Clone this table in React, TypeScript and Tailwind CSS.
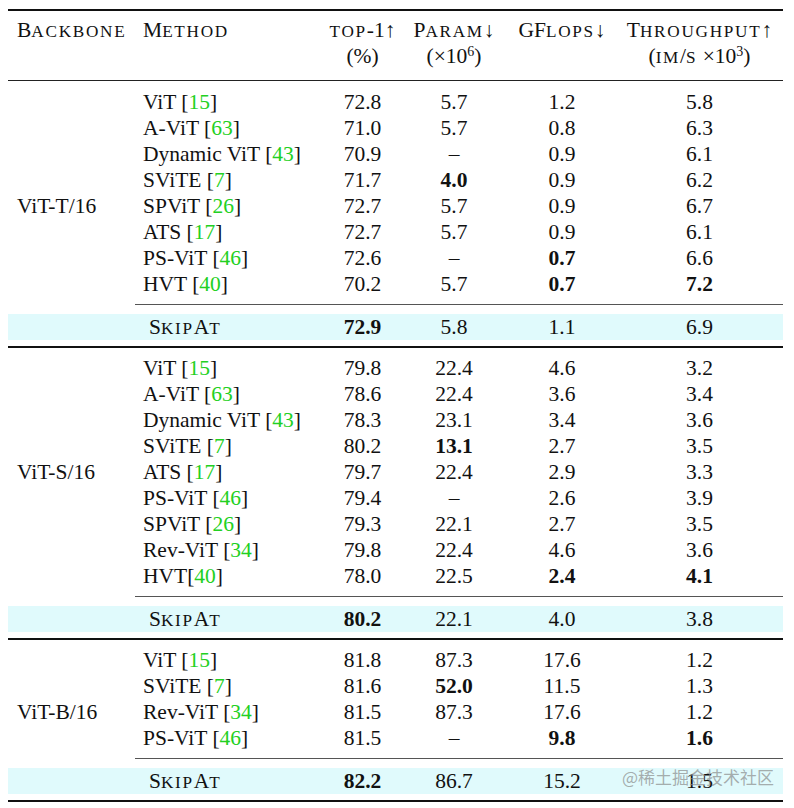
import type { ReactNode } from 'react';

type Key = 'top1' | 'param' | 'gflops' | 'tput';

type Row = {
  name: string;
  cite: string;
  tight?: boolean; // "HVT[40]" has no space before the bracket
  top1: string;
  param: string;
  gflops: string;
  tput: string;
  bold?: Key[];
};

type Section = {
  backbone: string;
  labelAt: number;
  rows: Row[];
  skip: Record<Key, string>;
};

const sections: Section[] = [
  {
    backbone: 'ViT-T/16',
    labelAt: 4,
    rows: [
      { name: 'ViT', cite: '15', top1: '72.8', param: '5.7', gflops: '1.2', tput: '5.8' },
      { name: 'A-ViT', cite: '63', top1: '71.0', param: '5.7', gflops: '0.8', tput: '6.3' },
      { name: 'Dynamic ViT', cite: '43', top1: '70.9', param: '–', gflops: '0.9', tput: '6.1' },
      { name: 'SViTE', cite: '7', top1: '71.7', param: '4.0', gflops: '0.9', tput: '6.2', bold: ['param'] },
      { name: 'SPViT', cite: '26', top1: '72.7', param: '5.7', gflops: '0.9', tput: '6.7' },
      { name: 'ATS', cite: '17', top1: '72.7', param: '5.7', gflops: '0.9', tput: '6.1' },
      { name: 'PS-ViT', cite: '46', top1: '72.6', param: '–', gflops: '0.7', tput: '6.6', bold: ['gflops'] },
      { name: 'HVT', cite: '40', top1: '70.2', param: '5.7', gflops: '0.7', tput: '7.2', bold: ['gflops', 'tput'] },
    ],
    skip: { top1: '72.9', param: '5.8', gflops: '1.1', tput: '6.9' },
  },
  {
    backbone: 'ViT-S/16',
    labelAt: 4,
    rows: [
      { name: 'ViT', cite: '15', top1: '79.8', param: '22.4', gflops: '4.6', tput: '3.2' },
      { name: 'A-ViT', cite: '63', top1: '78.6', param: '22.4', gflops: '3.6', tput: '3.4' },
      { name: 'Dynamic ViT', cite: '43', top1: '78.3', param: '23.1', gflops: '3.4', tput: '3.6' },
      { name: 'SViTE', cite: '7', top1: '80.2', param: '13.1', gflops: '2.7', tput: '3.5', bold: ['param'] },
      { name: 'ATS', cite: '17', top1: '79.7', param: '22.4', gflops: '2.9', tput: '3.3' },
      { name: 'PS-ViT', cite: '46', top1: '79.4', param: '–', gflops: '2.6', tput: '3.9' },
      { name: 'SPViT', cite: '26', top1: '79.3', param: '22.1', gflops: '2.7', tput: '3.5' },
      { name: 'Rev-ViT', cite: '34', top1: '79.8', param: '22.4', gflops: '4.6', tput: '3.6' },
      { name: 'HVT', cite: '40', tight: true, top1: '78.0', param: '22.5', gflops: '2.4', tput: '4.1', bold: ['gflops', 'tput'] },
    ],
    skip: { top1: '80.2', param: '22.1', gflops: '4.0', tput: '3.8' },
  },
  {
    backbone: 'ViT-B/16',
    labelAt: 2,
    rows: [
      { name: 'ViT', cite: '15', top1: '81.8', param: '87.3', gflops: '17.6', tput: '1.2' },
      { name: 'SViTE', cite: '7', top1: '81.6', param: '52.0', gflops: '11.5', tput: '1.3', bold: ['param'] },
      { name: 'Rev-ViT', cite: '34', top1: '81.5', param: '87.3', gflops: '17.6', tput: '1.2' },
      { name: 'PS-ViT', cite: '46', top1: '81.5', param: '–', gflops: '9.8', tput: '1.6', bold: ['gflops', 'tput'] },
    ],
    skip: { top1: '82.2', param: '86.7', gflops: '15.2', tput: '1.5' },
  },
];

const cols = 'grid grid-cols-[127px_190px_75px_108px_108px_167px]';

// LaTeX-style small caps: lower-case letters become capitals at ~80% size
function SC({ t }: { t: string }) {
  const runs: { low: boolean; s: string }[] = [];
  for (const ch of t) {
    const low = ch !== ch.toUpperCase();
    const last = runs[runs.length - 1];
    if (last && last.low === low) last.s += ch;
    else runs.push({ low, s: ch });
  }
  return (
    <>
      {runs.map((r, i) =>
        r.low ? (
          <span key={i} className="text-[0.8em] leading-none tracking-[0.1em]">
            {r.s.toUpperCase()}
          </span>
        ) : (
          <span key={i}>{r.s}</span>
        )
      )}
    </>
  );
}

function Num({ v, b }: { v: string; b?: boolean }) {
  return <div className={`text-center ${b ? 'font-bold' : ''}`}>{v}</div>;
}

function Head({ a, b }: { a: ReactNode; b?: ReactNode }) {
  return (
    <div className="flex flex-col items-center">
      <div className="h-[26px] whitespace-nowrap">{a}</div>
      {b && <div className="h-[26px] whitespace-nowrap">{b}</div>}
    </div>
  );
}

export default function App() {
  return (
    <div className="relative bg-white w-[794px] h-[808px] pt-[9px] font-['Liberation_Serif',serif] text-[21.5px] leading-[26px] text-[#111]">
      <div className="ml-[8px] w-[775px]">
        <div className="h-[2px] bg-[#111]" />

        {/* header */}
        <div className={`${cols} h-[69px] pt-[6px]`}>
          <div className="h-[26px] pl-[9px] whitespace-nowrap">
            <SC t="Backbone" />
          </div>
          <div className="h-[26px] pl-[8px] whitespace-nowrap">
            <SC t="Method" />
          </div>
          <Head a={<SC t="top-1↑" />} b="(%)" />
          <Head
            a={<SC t="Param↓" />}
            b={
              <>
                (×10<sup className="text-[14px] leading-none">6</sup>)
              </>
            }
          />
          <Head a={<SC t="GFlops↓" />} />
          <Head
            a={<SC t="Throughput↑" />}
            b={
              <>
                (<SC t="im/s" /> ×10<sup className="text-[14px] leading-none">3</sup>)
              </>
            }
          />
        </div>
        <div className="h-px bg-[#222]" />

        {sections.map((s, si) => (
          <div key={s.backbone}>
            <div className={si === 0 ? 'pt-[8px] pb-[7px]' : 'py-[7px]'}>
              {s.rows.map((r, i) => (
                <div key={r.name} className={`${cols} h-[26px]`}>
                  <div className="pl-[9px] whitespace-nowrap">{i === s.labelAt ? s.backbone : ''}</div>
                  <div className="pl-[8px] whitespace-nowrap">
                    {r.name}
                    {r.tight ? '' : ' '}[<span className="text-[#22d022]">{r.cite}</span>]
                  </div>
                  <Num v={r.top1} b={r.bold?.includes('top1')} />
                  <Num v={r.param} b={r.bold?.includes('param')} />
                  <Num v={r.gflops} b={r.bold?.includes('gflops')} />
                  <Num v={r.tput} b={r.bold?.includes('tput')} />
                </div>
              ))}
            </div>
            <div className="ml-[127px] h-px bg-[#555]" />
            <div className={`${cols} mt-[9px] h-[26px] bg-[#e0fafc]`}>
              <div />
              <div className="pl-[14px] whitespace-nowrap">
                <SC t="SkipAt" />
              </div>
              <Num v={s.skip.top1} b />
              <Num v={s.skip.param} />
              <Num v={s.skip.gflops} />
              <Num v={s.skip.tput} />
            </div>
            <div className="mt-[6px] h-[2px] bg-[#111]" />
          </div>
        ))}
      </div>

      {/* site watermark */}
      <div className="absolute left-[622px] top-[765px] font-['Noto_Sans_CJK_SC',sans-serif] text-[17px] leading-[24px] text-[#8a8a8a]/70">
        @稀土掘金技术社区
      </div>
    </div>
  );
}
